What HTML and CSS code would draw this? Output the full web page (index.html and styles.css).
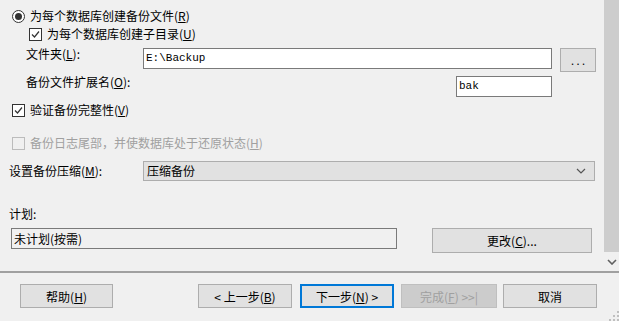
FILE: index.html
```html
<!DOCTYPE html>
<html lang="zh-CN">
<head>
    <meta charset="UTF-8">
    <title>备份选项</title>
    <link rel="stylesheet" href="styles.css">
</head>
<body>
    <div class="wizard">
        <div class="body">
            <div class="content">
                <div class="row row-radio">
                    <span class="radio"><span class="dot"></span></span>
                    <span>为每个数据库创建备份文件(<u>R</u>)</span>
                </div>
                <div class="row row-sub">
                    <span class="check on">
                        <svg width="11" height="11" viewBox="0 0 11 11"><path d="M2 5.5 L4.5 8 L9 2.5" fill="none" stroke="#333" stroke-width="1.2"/></svg>
                    </span>
                    <span>为每个数据库创建子目录(<u>U</u>)</span>
                </div>
                <div class="row row-folder">
                    <label class="label-indent">文件夹(<u>L</u>):</label>
                    <div class="textbox folder-box">E:\Backup</div>
                    <button class="btn browse">. . .</button>
                </div>
                <div class="row row-ext">
                    <label class="label-indent">备份文件扩展名(<u>O</u>):</label>
                    <div class="textbox ext-box">bak</div>
                </div>
                <div class="row row-verify">
                    <span class="check on">
                        <svg width="11" height="11" viewBox="0 0 11 11"><path d="M2 5.5 L4.5 8 L9 2.5" fill="none" stroke="#333" stroke-width="1.2"/></svg>
                    </span>
                    <span>验证备份完整性(<u>V</u>)</span>
                </div>
                <div class="row row-tail disabled">
                    <span class="check off"></span>
                    <span>备份日志尾部，并使数据库处于还原状态(<u>H</u>)</span>
                </div>
                <div class="row row-compress">
                    <label class="label-left">设置备份压缩(<u>M</u>):</label>
                    <div class="combo">
                        <span>压缩备份</span>
                        <svg width="10" height="6" viewBox="0 0 10 6"><path d="M1 1 L5 5 L9 1" fill="none" stroke="#555" stroke-width="1.2"/></svg>
                    </div>
                </div>
                <div class="row row-plan-label">
                    <label class="label-left">计划:</label>
                </div>
                <div class="row row-plan">
                    <div class="textbox plan-box">未计划(按需)</div>
                    <button class="btn change">更改(<u>C</u>)...</button>
                </div>
            </div>
            <div class="scrollbar">
                <div class="thumb"></div>
                <div class="arrow">
                    <svg width="10" height="6" viewBox="0 0 10 6"><path d="M1 1 L5 5 L9 1" fill="none" stroke="#606060" stroke-width="1.6"/></svg>
                </div>
            </div>
        </div>

        <div class="footer">
            <button class="btn help">帮助(<u>H</u>)</button>
            <button class="btn back">&lt; 上一步(<u>B</u>)</button>
            <button class="btn next">下一步(<u>N</u>) &gt;</button>
            <button class="btn finish" disabled>完成(<u>F</u>) &gt;&gt;|</button>
            <button class="btn cancel">取消</button>
            <svg class="grip" width="10" height="10" viewBox="0 0 10 10">
                <rect x="8" y="0" width="2" height="2" fill="#bfbfbf"/>
                <rect x="4" y="4" width="2" height="2" fill="#bfbfbf"/>
                <rect x="8" y="4" width="2" height="2" fill="#bfbfbf"/>
                <rect x="0" y="8" width="2" height="2" fill="#bfbfbf"/>
                <rect x="4" y="8" width="2" height="2" fill="#bfbfbf"/>
                <rect x="8" y="8" width="2" height="2" fill="#bfbfbf"/>
            </svg>
        </div>
    </div>
</body>
</html>
```

FILE: styles.css
```css
body {
    margin: 0;
    padding: 0;
    background-color: #f0f0f0;
    font-family: "Noto Sans CJK SC", "Noto Sans", sans-serif;
    font-size: 12px;
    color: #000;
}

.wizard {
    width: 619px;
    height: 321px;
    position: relative;
    overflow: hidden;
}

.body {
    display: flex;
    height: 271px;
}

.content {
    width: 603px;
}

.row {
    display: flex;
    align-items: center;
    line-height: 16px;
}

u {
    text-underline-offset: 1px;
}

/* radio / checkbox */
.radio {
    width: 11px;
    height: 11px;
    border: 1px solid #333;
    border-radius: 50%;
    background-color: #fff;
    display: flex;
    align-items: center;
    justify-content: center;
    margin-right: 5px;
}

.radio .dot {
    width: 7px;
    height: 7px;
    border-radius: 50%;
    background-color: #333;
}

.check {
    width: 11px;
    height: 11px;
    border: 1px solid #333;
    background-color: #fff;
    display: flex;
    align-items: center;
    justify-content: center;
    margin-right: 5px;
}

.check.off {
    border-color: #bcbcbc;
    background-color: #f0f0f0;
}

.disabled {
    color: #a0a0a0;
}

.row-radio {
    margin-top: 8px;
    height: 16px;
    padding-left: 12px;
}

.row-sub {
    margin-top: 2px;
    height: 16px;
    padding-left: 29px;
}

.row-folder {
    margin-top: 6px;
    height: 24px;
    align-items: flex-start;
    padding-left: 26px;
}

.label-indent {
    width: 117px;
    line-height: 12px;
}

.textbox {
    border: 1px solid #7a7a7a;
    background-color: #fff;
    box-sizing: border-box;
    font-family: "Liberation Mono", monospace;
    font-size: 11px;
    line-height: 19px;
    padding-left: 2px;
}

.folder-box {
    width: 409px;
    height: 21px;
}

.btn {
    font-family: "Noto Sans CJK SC", "Noto Sans", sans-serif;
    font-size: 12px;
    color: #000;
    background-color: #e1e1e1;
    border: 1px solid #adadad;
    box-sizing: border-box;
    padding: 0;
    margin: 0;
}

.browse {
    width: 36px;
    height: 24px;
    margin-left: 8px;
    font-size: 11px;
}

.row-ext {
    margin-top: 4px;
    height: 21px;
    align-items: flex-start;
    padding-left: 26px;
}

.row-ext .label-indent {
    width: 430px;
    padding-top: 0;
}

.ext-box {
    width: 96px;
    height: 21px;
}

.row-verify {
    margin-top: 5px;
    height: 16px;
    padding-left: 12px;
}

.row-tail {
    margin-top: 17px;
    height: 16px;
    padding-left: 12px;
}

.row-compress {
    margin-top: 10px;
    height: 20px;
    padding-left: 9px;
}

.label-left {
    width: 134px;
}

.combo {
    width: 452px;
    height: 20px;
    box-sizing: border-box;
    background-color: #e1e1e1;
    border: 1px solid #adadad;
    display: flex;
    align-items: center;
    justify-content: space-between;
    padding: 0 8px 0 3px;
}

.row-plan-label {
    margin-top: 25px;
    height: 16px;
    padding-left: 9px;
}

.row-plan {
    margin-top: 6px;
    height: 25px;
    align-items: flex-start;
    padding-left: 11px;
}

.plan-box {
    width: 386px;
    height: 21px;
    background-color: #f0f0f0;
    font-family: "Noto Sans CJK SC", "Noto Sans", sans-serif;
    font-size: 12px;
}

.change {
    width: 160px;
    height: 25px;
    margin-left: 35px;
}

/* scrollbar */
.scrollbar {
    width: 16px;
    display: flex;
    flex-direction: column;
    background-color: #f0f0f0;
}

.thumb {
    height: 252px;
    margin-left: 1px;
    background-color: #cdcdcd;
}

.arrow {
    flex: 1;
    display: flex;
    align-items: center;
    justify-content: center;
    padding-left: 1px;
}

/* footer */
.footer {
    border-top: 2px solid #a0a0a0;
    height: 48px;
    display: flex;
    align-items: flex-start;
    padding-left: 20px;
}

.footer .btn {
    height: 24px;
    margin-top: 11px;
    width: 94px;
}

.help {
    width: 93px !important;
}

.back {
    margin-left: 85px !important;
}

.next {
    margin-left: 8px !important;
    border: 2px solid #0078d7 !important;
}

.finish {
    margin-left: 7px !important;
    width: 96px !important;
    background-color: #cccccc !important;
    border-color: #bfbfbf !important;
    color: #a0a0a0 !important;
}

.cancel {
    margin-left: 6px !important;
}

.grip {
    position: absolute;
    right: 0;
    bottom: 0;
}
```
